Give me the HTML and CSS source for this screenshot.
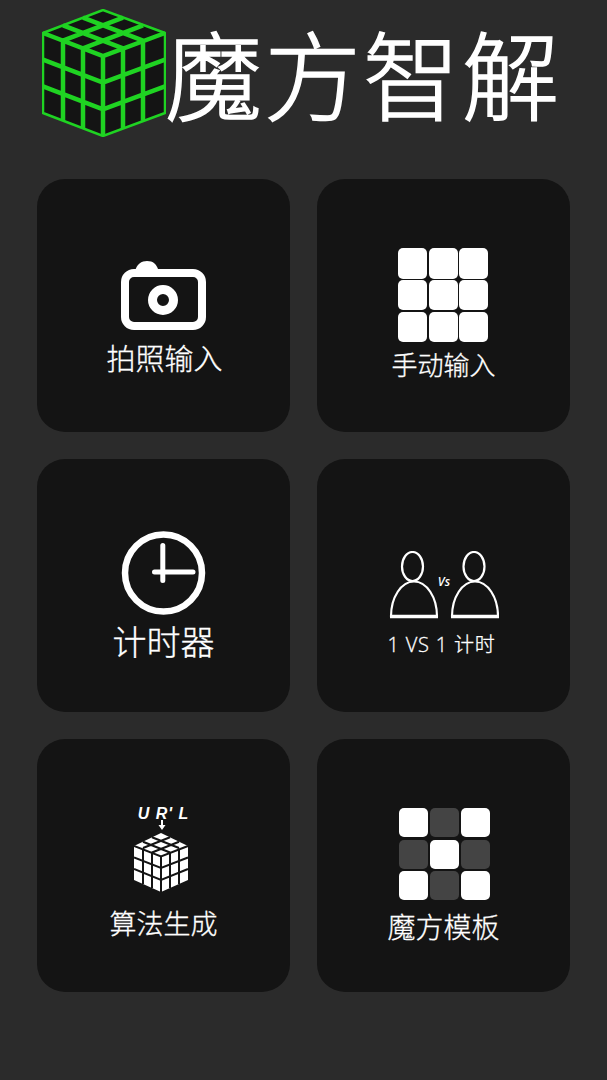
FILE: index.html
```html
<!DOCTYPE html>
<html lang="zh-CN">

<head>
    <meta charset="utf-8">
    <title>魔方智解</title>
    <link rel="stylesheet" href="styles.css">
</head>

<body>
    <header class="header">
        <svg class="logo" width="124" height="128" viewBox="0 0 124 128">
            <path class="logo-body" d="M61 1L123 24V104L61 127L1 104V24Z" />
            <path class="logo-grid" d="M1 24L61 47L123 24M61 47V127
                M21 16.300L81 39.300M41 8.700L101 31.700M101 16.300L41 39.300M81 8.700L21 31.700
                M21 31.700V111.700M41 39.300V119.300M81 39.300V119.300M101 31.700V111.700
                M1 50.700L61 73.700L123 50.700M1 77.300L61 100.300L123 77.300" />
            <path class="logo-edge" d="M61 1L123 24V104L61 127L1 104V24Z" />
        </svg>
        <h1 class="title">魔方智解</h1>
    </header>

    <main class="menu">
        <a class="card card-photo">
            <svg width="86" height="70" viewBox="0 0 86 70">
                <path class="camera-top" d="M14 12C15 4 21 1 26 1C32 1 36 4 38 12Z" />
                <rect class="camera" x="4" y="13" width="77" height="53" rx="9" />
                <circle class="lens" cx="42" cy="40" r="10.500" />
            </svg>
            <span class="label label-photo">拍照输入</span>
        </a>

        <a class="card card-manual">
            <div class="tiles tiles-plain">
                <i></i><i></i><i></i>
                <i></i><i></i><i></i>
                <i></i><i></i><i></i>
            </div>
            <span class="label label-manual">手动输入</span>
        </a>

        <a class="card card-timer">
            <svg width="86" height="84" viewBox="0 0 86 84">
                <circle class="dial" cx="42.500" cy="42" r="38.500" />
                <path class="hands" d="M41.800 14.500V49.500M33.500 41H72" />
            </svg>
            <span class="label label-timer">计时器</span>
        </a>

        <a class="card card-versus">
            <svg width="110" height="68" viewBox="0 0 110 68">
                <g class="person">
                    <ellipse cx="23.500" cy="15.500" rx="10.500" ry="14.500" />
                    <path d="M2 65.500A23 35 0 0 1 48 65.500" />
                    <path class="base" d="M1 65.500H49" />
                </g>
                <g class="person">
                    <ellipse cx="85" cy="15.500" rx="10.500" ry="14.500" />
                    <path d="M63 65.500A23 35 0 0 1 109 65.500" />
                    <path class="base" d="M62 65.500H110" />
                </g>
                <text class="vs" x="55" y="35">Vs</text>
            </svg>
            <span class="label label-versus">1 VS 1 计时</span>
        </a>

        <a class="card card-algo">
            <span class="moves">U R' L</span>
            <svg class="mini-cube" width="56" height="72" viewBox="0 0 56 72">
                <path class="arrow" d="M27 0V5H24.500L28 10L31.500 5H29V0Z" />
                <path class="mini-body" d="M27 13L54 26V60L27 72L0 60V26Z" />
                <path class="mini-grid" d="M0 26L27 36.500L54 26M27 36.500V72
                    M9 21.700L36 32.500M18 17.300L45 28M45 21.700L18 32.500M36 17.300L9 28
                    M9 30V64M18 33V68M36 33V68M45 30V64
                    M0 37.500L27 48L54 37.500M0 49L27 60L54 49" />
            </svg>
            <span class="label label-algo">算法生成</span>
        </a>

        <a class="card card-template">
            <div class="tiles tiles-pattern">
                <i></i><i class="dim"></i><i></i>
                <i class="dim"></i><i></i><i class="dim"></i>
                <i></i><i class="dim"></i><i></i>
            </div>
            <span class="label label-template">魔方模板</span>
        </a>
    </main>
</body>

</html>
```

FILE: styles.css
```css
* {
    box-sizing: border-box;
}

html,
body {
    margin: 0;
    height: 1080px;
    overflow: hidden;
}

body {
    background-color: #2b2b2b;
    color: #fff;
    font-family: "Noto Sans CJK SC", "Noto Sans", sans-serif;
    font-weight: 300;
}

.header {
    display: flex;
    align-items: flex-start;
    height: 179px;
    padding: 9px 0 0 42px;
}

.logo {
    flex: none;
}

.title {
    margin: 13px 0 0 -1px;
    font-size: 97px;
    font-weight: 300;
    line-height: 98px;
    letter-spacing: 2px;
    white-space: nowrap;
    -webkit-text-stroke: 1.500px #fff;
}

.logo-body {
    fill: #141414;
}

.logo-grid {
    fill: none;
    stroke: #1fd322;
    stroke-width: 4.500;
}

.logo-edge {
    fill: none;
    stroke: #1fd322;
    stroke-width: 2.500;
    stroke-linejoin: round;
}

.menu {
    display: grid;
    grid-template-columns: 253px 253px;
    grid-auto-rows: 253px;
    gap: 27px;
    padding-left: 37px;
}

.card {
    display: flex;
    flex-direction: column;
    align-items: center;
    border-radius: 28px;
    background-color: #141414;
}

.label {
    display: block;
    white-space: nowrap;
    line-height: 1.2;
    -webkit-text-stroke: 0.300px #fff;
}

.card-photo {
    padding-top: 81px;
}

.label-photo {
    margin: 10px 0 0 2px;
    font-size: 29px;
}

.card-manual {
    padding-top: 69px;
}

.label-manual {
    margin-top: 6px;
    font-size: 26px;
}

.card-timer {
    padding-top: 72px;
}

.label-timer {
    margin-top: 6px;
    font-size: 34px;
}

.card-versus {
    padding-top: 92px;
}

.label-versus {
    margin: 14px 4px 0 0;
    font-family: "Open Sans", "Noto Sans CJK SC", sans-serif;
    font-size: 20px;
    letter-spacing: 0.800px;
}

.card-algo {
    padding-top: 67px;
}

.mini-cube {
    margin: -2px 0 0 -3px;
}

.label-algo {
    margin-top: 15px;
    font-size: 27px;
}

.card-template {
    padding-top: 69px;
}

.label-template {
    margin-top: 10px;
    font-size: 28px;
}

.tiles {
    display: grid;
    grid-template-columns: repeat(3, 29px);
}

.tiles i {
    display: block;
    border-radius: 5px;
    background-color: #fff;
}

.tiles-plain {
    grid-auto-rows: 30.500px;
    gap: 1.300px 1.500px;
    margin-right: 1px;
}

.tiles-pattern {
    grid-auto-rows: 29px;
    gap: 2.500px 2px;
    margin-left: 2px;
}

.tiles i.dim {
    background-color: #444;
}

.camera-top {
    fill: #fff;
}

.camera {
    fill: #141414;
    stroke: #fff;
    stroke-width: 8;
}

.lens {
    fill: none;
    stroke: #fff;
    stroke-width: 9;
}

.dial {
    fill: none;
    stroke: #fff;
    stroke-width: 6.500;
}

.hands {
    fill: none;
    stroke: #fff;
    stroke-width: 5;
    stroke-linecap: round;
}

.person ellipse,
.person path {
    fill: none;
    stroke: #fff;
    stroke-width: 2.200;
}

.person path.base {
    stroke-width: 3.500;
}

.vs {
    fill: #fff;
    font-family: "Open Sans", sans-serif;
    font-size: 12px;
    font-style: italic;
    font-weight: 600;
    text-anchor: middle;
}

.moves {
    display: block;
    font-family: "Liberation Sans", sans-serif;
    font-size: 16px;
    font-style: italic;
    font-weight: 700;
    line-height: 16px;
    letter-spacing: 1px;
    white-space: pre;
}

.arrow {
    fill: #fff;
}

.mini-body {
    fill: #fff;
}

.mini-grid {
    fill: none;
    stroke: #141414;
    stroke-width: 2;
}
```
